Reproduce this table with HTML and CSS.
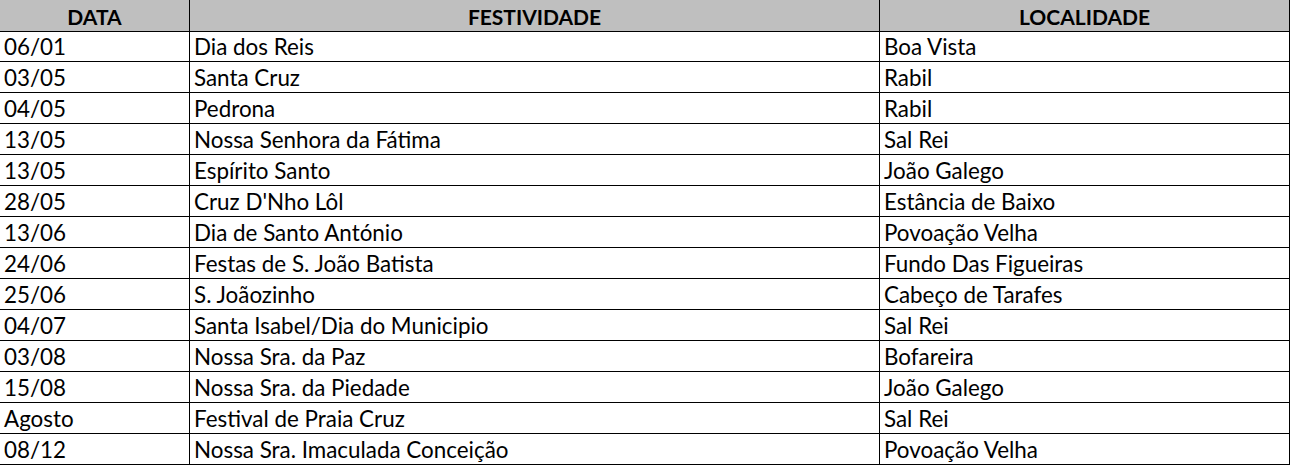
FILE: index.html
```html
<!DOCTYPE html>
<html lang="pt">
<head>
<meta charset="utf-8">
<title>Festividades</title>
<link rel="stylesheet" href="styles.css">
</head>
<body>
<div class="sheet">
  <div class="cell head">DATA</div>
  <div class="cell head">FESTIVIDADE</div>
  <div class="cell head">LOCALIDADE</div>

  <div class="cell">06/01</div><div class="cell">Dia dos Reis</div><div class="cell">Boa Vista</div>
  <div class="cell">03/05</div><div class="cell">Santa Cruz</div><div class="cell">Rabil</div>
  <div class="cell">04/05</div><div class="cell">Pedrona</div><div class="cell">Rabil</div>
  <div class="cell">13/05</div><div class="cell">Nossa Senhora da Fátima</div><div class="cell">Sal Rei</div>
  <div class="cell">13/05</div><div class="cell">Espírito Santo</div><div class="cell">João Galego</div>
  <div class="cell">28/05</div><div class="cell">Cruz D'Nho Lôl</div><div class="cell">Estância de Baixo</div>
  <div class="cell">13/06</div><div class="cell">Dia de Santo António</div><div class="cell">Povoação Velha</div>
  <div class="cell">24/06</div><div class="cell">Festas de S. João Batista</div><div class="cell">Fundo Das Figueiras</div>
  <div class="cell">25/06</div><div class="cell">S. Joãozinho</div><div class="cell">Cabeço de Tarafes</div>
  <div class="cell">04/07</div><div class="cell">Santa Isabel/Dia do Municipio</div><div class="cell">Sal Rei</div>
  <div class="cell">03/08</div><div class="cell">Nossa Sra. da Paz</div><div class="cell">Bofareira</div>
  <div class="cell">15/08</div><div class="cell">Nossa Sra. da Piedade</div><div class="cell">João Galego</div>
  <div class="cell">Agosto</div><div class="cell">Festival de Praia Cruz</div><div class="cell">Sal Rei</div>
  <div class="cell">08/12</div><div class="cell">Nossa Sra. Imaculada Conceição</div><div class="cell">Povoação Velha</div>
</div>
</body>
</html>
```

FILE: styles.css
```css
html, body {
  margin: 0;
  padding: 0;
  background: #ffffff;
}

.sheet {
  display: grid;
  grid-template-columns: 190px 690px 410px;
  grid-auto-rows: 31px;
  width: 1290px;
  font-family: Lato, "Open Sans", sans-serif;
  font-size: 22.4px;
  color: #000000;
}

.cell {
  box-sizing: border-box;
  border-right: 1px solid #000000;
  border-bottom: 1px solid #000000;
  padding: 2px 4px 0;
  line-height: 28px;
  white-space: nowrap;
  overflow: hidden;
}

.head {
  align-self: start;
  height: 32px;
  padding-top: 0;
  line-height: 33px;
  background: #bfbfbf;
  font-size: 21px;
  font-weight: bold;
  text-align: center;
}
```
